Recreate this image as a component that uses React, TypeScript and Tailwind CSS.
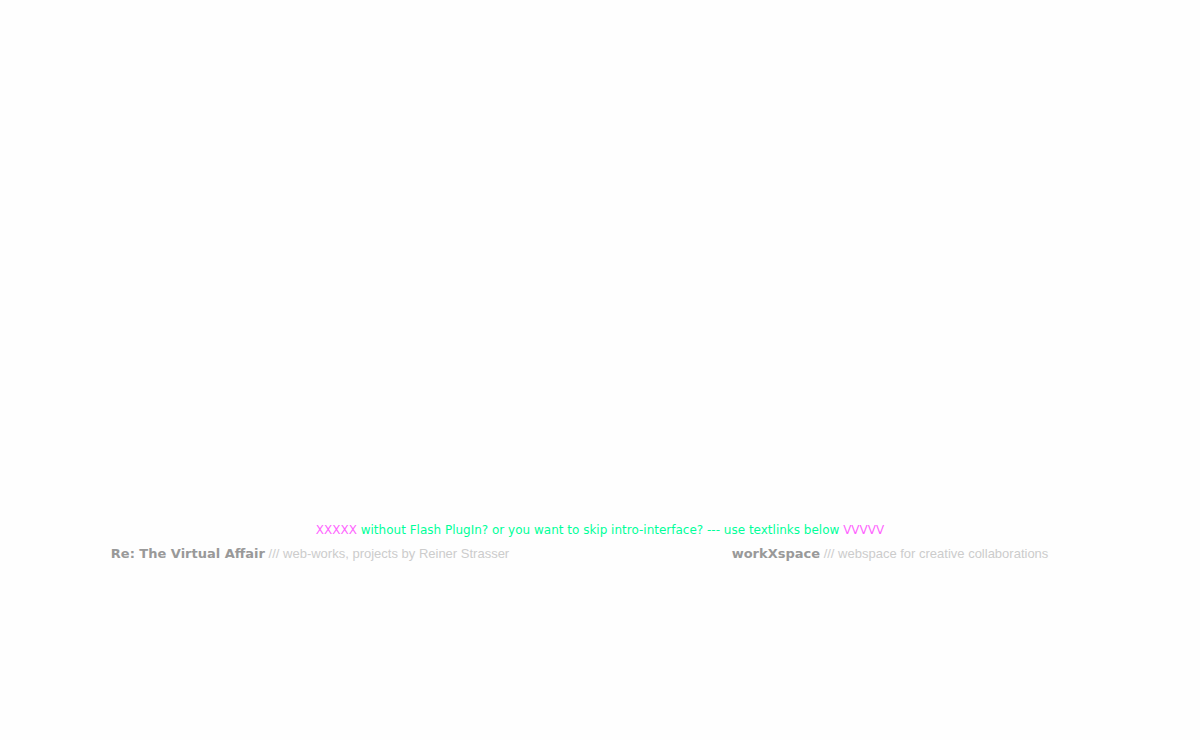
import React from "react";

const App = () => {
  const links = [
    {
      id: 1,
      title: "Re: The Virtual Affair",
      text: "/// web-works, projects by Reiner Strasser",
    },
    {
      id: 2,
      title: "workXspace",
      text: "/// webspace for creative collaborations",
    },
  ];

  return (
    <main className="min-h-screen bg-[#fefefe] px-5 pt-5">
      {/* Intro stage, left empty when the plugin is missing */}
      <div className="h-[500px]" />
      <p className="text-center font-['DejaVu_Sans',sans-serif] text-[12px] leading-5 text-[#00ff99]">
        <span className="text-[#ff66ff]">XXXXX</span> without Flash PlugIn? or you want to skip intro-interface? --- use
        textlinks below <span className="text-[#ff66ff]">VVVVV</span>
      </p>
      <nav className="mt-1 grid grid-cols-2 text-center font-['Liberation_Sans',sans-serif] text-[13px] leading-5 text-[#cccccc]">
        {links.map((link) => (
          <div key={link.id}>
            <a href="#" className="font-['DejaVu_Sans',sans-serif] font-bold text-[#999999]">
              {link.title}
            </a>{" "}
            {link.text}
          </div>
        ))}
      </nav>
    </main>
  );
};

export default App;
